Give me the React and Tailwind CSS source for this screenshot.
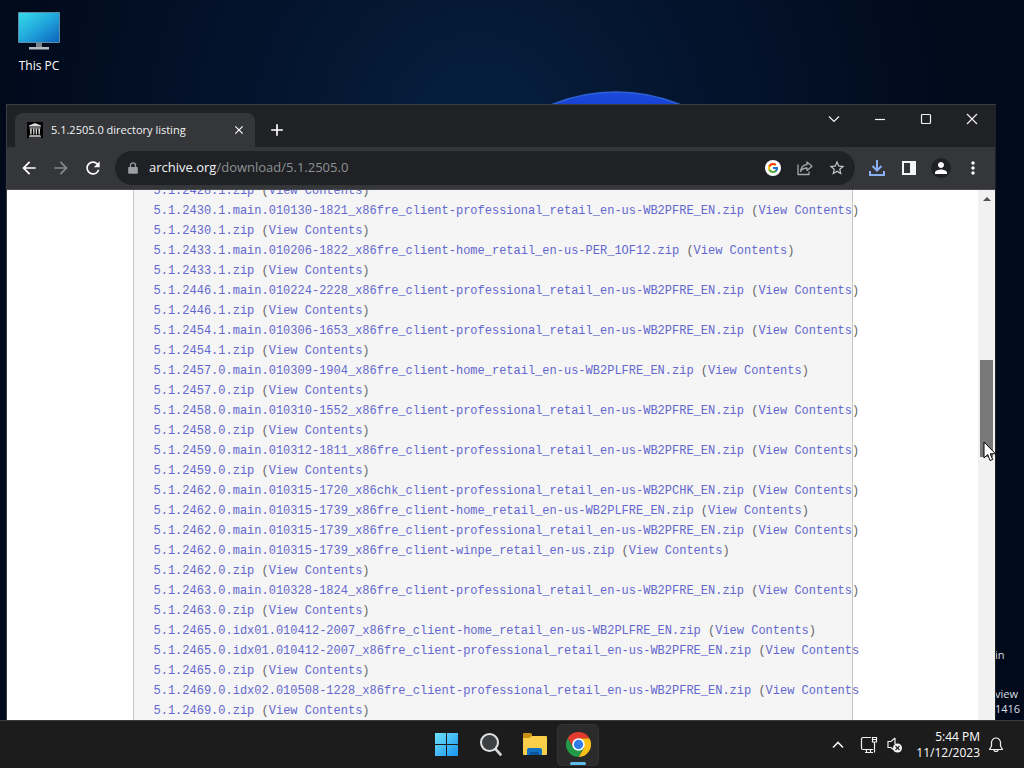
import { MdArrowBack, MdArrowForward, MdRefresh, MdStarBorder, MdMoreVert, MdPerson, MdAdd, MdClose } from 'react-icons/md';
import { FcGoogle } from 'react-icons/fc';

// Directory entries, in the order the listing shows them
const files = [
  '5.1.2428.1.zip',
  '5.1.2430.1.main.010130-1821_x86fre_client-professional_retail_en-us-WB2PFRE_EN.zip',
  '5.1.2430.1.zip',
  '5.1.2433.1.main.010206-1822_x86fre_client-home_retail_en-us-PER_1OF12.zip',
  '5.1.2433.1.zip',
  '5.1.2446.1.main.010224-2228_x86fre_client-professional_retail_en-us-WB2PFRE_EN.zip',
  '5.1.2446.1.zip',
  '5.1.2454.1.main.010306-1653_x86fre_client-professional_retail_en-us-WB2PFRE_EN.zip',
  '5.1.2454.1.zip',
  '5.1.2457.0.main.010309-1904_x86fre_client-home_retail_en-us-WB2PLFRE_EN.zip',
  '5.1.2457.0.zip',
  '5.1.2458.0.main.010310-1552_x86fre_client-professional_retail_en-us-WB2PFRE_EN.zip',
  '5.1.2458.0.zip',
  '5.1.2459.0.main.010312-1811_x86fre_client-professional_retail_en-us-WB2PFRE_EN.zip',
  '5.1.2459.0.zip',
  '5.1.2462.0.main.010315-1720_x86chk_client-professional_retail_en-us-WB2PCHK_EN.zip',
  '5.1.2462.0.main.010315-1739_x86fre_client-home_retail_en-us-WB2PLFRE_EN.zip',
  '5.1.2462.0.main.010315-1739_x86fre_client-professional_retail_en-us-WB2PFRE_EN.zip',
  '5.1.2462.0.main.010315-1739_x86fre_client-winpe_retail_en-us.zip',
  '5.1.2462.0.zip',
  '5.1.2463.0.main.010328-1824_x86fre_client-professional_retail_en-us-WB2PFRE_EN.zip',
  '5.1.2463.0.zip',
  '5.1.2465.0.idx01.010412-2007_x86fre_client-home_retail_en-us-WB2PLFRE_EN.zip',
  '5.1.2465.0.idx01.010412-2007_x86fre_client-professional_retail_en-us-WB2PFRE_EN.zip',
  '5.1.2465.0.zip',
  '5.1.2469.0.idx02.010508-1228_x86fre_client-professional_retail_en-us-WB2PFRE_EN.zip',
  '5.1.2469.0.zip',
];

const Wallpaper = () => (
  <svg className="absolute inset-0 h-full w-full" viewBox="0 0 1024 720" preserveAspectRatio="none" aria-hidden="true">
    <defs>
      <radialGradient id="glow" gradientUnits="userSpaceOnUse" cx="480" cy="130" r="480">
        <stop offset="0" stopColor="#062040" />
        <stop offset="0.45" stopColor="#04142e" />
        <stop offset="1" stopColor="#010a1b" />
      </radialGradient>
      <linearGradient id="bloom" x1="0" y1="0" x2="0" y2="1">
        <stop offset="0" stopColor="#1c4bdc" />
        <stop offset="0.1" stopColor="#0f2fc0" />
      </linearGradient>
    </defs>
    <rect width="1024" height="720" fill="url(#glow)" />
    <circle cx="616" cy="262" r="170" fill="url(#bloom)" stroke="#2f62d8" strokeWidth="1.5" />
  </svg>
);

const ThisPcIcon = () => (
  <svg width="44" height="40" viewBox="0 0 44 40" aria-hidden="true">
    <defs>
      <linearGradient id="screen" x1="0" y1="0" x2="1" y2="1">
        <stop offset="0" stopColor="#35dbe8" />
        <stop offset="0.5" stopColor="#21a6dc" />
        <stop offset="1" stopColor="#0c63bd" />
      </linearGradient>
    </defs>
    <rect x="1" y="2" width="42" height="31" rx="1" fill="#5c8ea6" />
    <rect x="2" y="3" width="40" height="29" fill="url(#screen)" />
    <path d="M19 33h6v4h-6z" fill="#78828a" />
    <path d="M12 37h20v2.500H12z" fill="#b4bcc2" />
  </svg>
);

const ArchiveIcon = () => (
  <svg width="16" height="16" viewBox="0 0 16 16" className="shrink-0" aria-hidden="true">
    <rect width="16" height="16" fill="#000" />
    <path d="M8 1 14 3.6v1H2v-1zM2.5 5.4h11v1h-11zM2.5 13h11v.8h-11zM2 14.3h12v1H2z" fill="#d8d8d8" />
    <path d="M3 6.8h1.8l-.3 5.8H3.3zM6 6.8h1.5l-.2 5.8H6.2zM8.6 6.8h1.5l-.2 5.8H8.8zM11.3 6.8H13l-.2 5.8h-1.2z" fill="#d8d8d8" />
  </svg>
);

const LockIcon = () => (
  <svg width="10" height="12" viewBox="0 0 10 12" className="shrink-0" aria-hidden="true">
    <path d="M1 5h8q.8 0 .8.8v5.200q0 .8-.8.8H1q-.8 0-.8-.8V5.800Q.2 5 1 5z" fill="#9aa0a6" />
    <path d="M2.500 5.500V3.300a2.500 2.500 0 0 1 5 0v2.200" fill="none" stroke="#9aa0a6" strokeWidth="1.300" />
  </svg>
);

const ShareIcon = () => (
  <svg width="16" height="16" viewBox="0 0 16 16" fill="none" stroke="#a3a6aa" strokeWidth="1.3" strokeLinejoin="round" aria-hidden="true">
    <path d="M1 4.5v10h11V11.5" />
    <path d="M10 2l5 4.2-5 4.2V8C7 8 4.8 9 3.5 11.5 4 7.5 6.3 4.8 10 4.5z" />
  </svg>
);

const DownloadIcon = () => (
  <svg width="18" height="18" viewBox="0 0 18 18" fill="none" stroke="#8ab0f5" strokeWidth="2" aria-hidden="true">
    <path d="M9 1v10M4.5 7 9 11.5 13.5 7M2 12v4h14v-4" />
  </svg>
);

const SidePanelIcon = () => (
  <svg width="14" height="14" viewBox="0 0 14 14" aria-hidden="true">
    <path fillRule="evenodd" d="M0 0h14v14H0zM2 2v10h6V2z" fill="#f4f5f6" />
  </svg>
);

const WindowsIcon = () => (
  <svg width="24" height="24" viewBox="0 0 24 24" aria-hidden="true">
    <defs>
      <linearGradient id="win" gradientUnits="userSpaceOnUse" x1="0" y1="0" x2="24" y2="24">
        <stop offset="0" stopColor="#6fe3fb" />
        <stop offset="1" stopColor="#1792ee" />
      </linearGradient>
    </defs>
    <path d="M1 0h11v11H1zM13 0h11v11H13zM1 12h11v11H1zM13 12h11v11H13z" fill="url(#win)" />
  </svg>
);

const SearchIcon = () => (
  <svg width="24" height="24" viewBox="0 0 24 24" aria-hidden="true">
    <path d="M17 15.500l5.500 6" stroke="#d5d5d5" strokeWidth="2.6" strokeLinecap="round" />
    <circle cx="11.500" cy="9.500" r="8.500" fill="#3d4043" stroke="#e2e2e2" strokeWidth="2" />
  </svg>
);

const FolderIcon = () => (
  <svg width="26" height="24" viewBox="0 0 26 24" aria-hidden="true">
    <path d="M2 1q0-1 1-1h6q1 0 2 1v3L7 6H2z" fill="#c98f16" />
    <path d="M2 5h6l3-2h14q1 0 1 1v17q0 1-1 1H3q-1 0-1-1z" fill="#f9cf4a" />
    <path d="M6 22v-5q0-2 2-2h11q2 0 2 2v5z" fill="#1172c4" />
    <path d="M9 19h9v3H9z" fill="#0b559c" />
  </svg>
);

const ChromeIcon = () => (
  <svg width="25" height="25" viewBox="0 0 48 48" aria-hidden="true">
    <path d="M24 12h20.800A24 24 0 0 1 24 48L34.400 30z" fill="#fbc116" />
    <path d="M3.200 12A24 24 0 0 1 44.800 12H24L13.600 30z" fill="#e33b2e" />
    <path d="M3.200 12 13.600 30H34.400L24 48A24 24 0 0 1 3.200 12z" fill="#229a48" />
    <circle cx="24" cy="24" r="12" fill="#fff" />
    <circle cx="24" cy="24" r="9" fill="#2f7de9" />
  </svg>
);

const NetworkIcon = () => (
  <svg width="18" height="18" viewBox="0 0 18 18" fill="none" stroke="#f0f0f0" strokeWidth="1.2" aria-hidden="true">
    <path d="M11 1.5H3q-1.500 0-1.500 1.500v9q0 1.500 1.500 1.500h10M5 16.500h8M6.500 13.500v3M10.500 13.500v3" />
    <path d="M12.500 1.500h4v4.500h-4zM12.500 3.500h4M14.500 6v10.500" />
  </svg>
);

const MutedIcon = () => (
  <svg width="18" height="18" viewBox="0 0 18 18" aria-hidden="true">
    <path d="M9 2 5 5.5H2v6h3l3 2.5M9 2v6" fill="none" stroke="#f0f0f0" strokeWidth="1.2" />
    <circle cx="11.5" cy="12" r="4.5" fill="#f4f4f4" />
    <path d="M9.5 10l4 4M13.5 10l-4 4" stroke="#222" strokeWidth="1.2" />
  </svg>
);

const BellIcon = () => (
  <svg width="16" height="16" viewBox="0 0 16 16" fill="none" stroke="#f0f0f0" strokeWidth="1.2" strokeLinejoin="round" aria-hidden="true">
    <path d="M8 1a4.500 4.500 0 0 0-4.500 4.500v3.500L1.500 12.500h13L12.500 9V5.500A4.500 4.500 0 0 0 8 1zM6 12.500a2 2 0 0 0 4 0" />
  </svg>
);

const IconButton = ({ label, children }) => (
  <button type="button" aria-label={label} className="flex h-8 w-8 shrink-0 items-center justify-center">
    {children}
  </button>
);

const CaptionButton = ({ label, d }) => (
  <button type="button" aria-label={label} className="flex h-7 w-[46px] items-center justify-center">
    <svg width="12" height="12" viewBox="0 0 12 12" fill="none" stroke="#f1f1f1" strokeWidth="1.2" aria-hidden="true">
      <path d={d} />
    </svg>
  </button>
);

const TabStrip = () => (
  <div className="flex h-[42px] items-end bg-[#202124] pl-2">
    <div className="flex h-[34px] w-[240px] items-center gap-2 rounded-t-lg bg-[#35363a] pl-3 pr-2">
      <ArchiveIcon />
      <span className="flex-1 truncate text-[11px] font-medium text-[#f1f3f4]">5.1.2505.0 directory listing</span>
      <button type="button" aria-label="Close tab" className="flex h-4 w-4 items-center justify-center">
        <MdClose className="h-3.5 w-3.5 text-white" />
      </button>
    </div>
    <button type="button" aria-label="New tab" className="ml-2 flex h-[34px] w-7 items-center justify-center">
      <MdAdd className="h-5 w-5 text-white" />
    </button>
    <div className="ml-auto flex self-start">
      <CaptionButton label="Search tabs" d="M1 3.5l5 5 5-5" />
      <CaptionButton label="Minimize" d="M1 6.5h10" />
      <CaptionButton label="Maximize" d="M2.5 1.5h7q1 0 1 1v7q0 1-1 1h-7q-1 0-1-1v-7q0-1 1-1z" />
      <CaptionButton label="Close" d="M1 1l10 10M11 1L1 11" />
    </div>
  </div>
);

const Toolbar = () => (
  <div className="flex h-[43px] items-center border-b border-[#4a4b4f] bg-[#35363a] px-1.5">
    <IconButton label="Back"><MdArrowBack className="h-5 w-5 text-white" /></IconButton>
    <IconButton label="Forward"><MdArrowForward className="h-5 w-5 text-[#85878a]" /></IconButton>
    <IconButton label="Reload"><MdRefresh className="h-5 w-5 text-white" /></IconButton>
    <div className="mx-1.5 flex h-[34px] min-w-0 flex-1 items-center gap-[11px] rounded-full bg-[#202124] pl-[13px] pr-0.5">
      <LockIcon />
      <div className="flex-1 truncate text-[13px] text-[#8d9196]">
        <span className="text-[#f1f3f4]">archive.org</span>/download/5.1.2505.0
      </div>
      <div className="flex">
        <IconButton label="Search with Google">
          <span className="flex h-4 w-4 items-center justify-center rounded-full bg-white">
            <FcGoogle className="h-3 w-3" />
          </span>
        </IconButton>
        <IconButton label="Share"><ShareIcon /></IconButton>
        <IconButton label="Bookmark"><MdStarBorder className="h-[18px] w-[18px] text-[#c6c9cc]" /></IconButton>
      </div>
    </div>
    <IconButton label="Downloads"><DownloadIcon /></IconButton>
    <IconButton label="Side panel"><SidePanelIcon /></IconButton>
    <IconButton label="Profile">
      <span className="flex h-5 w-5 items-center justify-center rounded-full bg-[#202124]">
        <MdPerson className="h-[18px] w-[18px] text-white" />
      </span>
    </IconButton>
    <IconButton label="Menu"><MdMoreVert className="h-5 w-5 text-white" /></IconButton>
  </div>
);

const Listing = () => (
  <ul className="mx-auto -mb-px flex w-full max-w-[720px] flex-col justify-end overflow-clip border-x border-[#c4c4c4] bg-[#f5f5f5] pl-5 font-['Liberation_Mono',monospace] text-xs leading-5 text-[#666] [overflow-clip-margin:7px]">
    {files.map((file) => (
      <li key={file} className="h-5 shrink-0 whitespace-nowrap">
        <a href={`#${file}`} className="text-[#6367cf]">{file}</a>
        {' ('}
        <a href={`#${file}/`} className="text-[#6367cf]">View Contents</a>
        {')'}
      </li>
    ))}
  </ul>
);

const BrowserWindow = () => (
  <section className="absolute bottom-0 left-1.5 right-7 top-[104px] flex flex-col border-l border-r border-t border-[#3b3f44] border-r-[#202124]">
    <TabStrip />
    <Toolbar />
    <div className="flex min-h-0 flex-1 overflow-hidden bg-white">
      <div className="flex min-w-0 flex-1">
        <Listing />
      </div>
      <div className="flex w-[17px] flex-col items-center bg-[#f1f1f1]">
        <button type="button" aria-label="Scroll up" className="flex h-[18px] w-full shrink-0 items-center justify-center">
          <svg width="8" height="4" viewBox="0 0 8 4" aria-hidden="true"><path d="M4 0l4 4H0z" fill="#505050" /></svg>
        </button>
        <div className="mt-[152px] h-[97px] w-[13px] bg-[#787878]" />
      </div>
    </div>
  </section>
);

const TaskButton = ({ label, active, children }) => (
  <button
    type="button"
    aria-label={label}
    className={`relative flex h-10 w-10 items-center justify-center rounded ${active ? 'bg-[#2b2b2b] ring-1 ring-[#333]' : ''}`}
  >
    {children}
    {active && <span className="absolute bottom-0 left-3 h-[3px] w-4 rounded-full bg-[#60bdea]" />}
  </button>
);

const Taskbar = () => (
  <footer className="grid h-12 shrink-0 grid-cols-[1fr_auto_1fr] items-center border-t border-[#3a3a3a] bg-[#1c1c1c] text-white">
    <div />
    <nav className="flex gap-1">
      <TaskButton label="Start"><WindowsIcon /></TaskButton>
      <TaskButton label="Search"><SearchIcon /></TaskButton>
      <TaskButton label="File Explorer"><FolderIcon /></TaskButton>
      <TaskButton label="Chrome" active><ChromeIcon /></TaskButton>
    </nav>
    <div className="flex items-center justify-end pr-5">
      <button type="button" aria-label="Hidden icons" className="mr-3.5 flex h-8 w-4 items-center justify-center">
        <svg width="12" height="8" viewBox="0 0 12 8" fill="none" stroke="#f0f0f0" strokeWidth="1.6" aria-hidden="true"><path d="M1 6.5l5-5 5 5" /></svg>
      </button>
      <button type="button" aria-label="Network and volume" className="mr-3 flex gap-2">
        <NetworkIcon />
        <MutedIcon />
      </button>
      <button type="button" className="mr-2 text-right text-xs leading-4">
        5:44 PM
        <br />
        11/12/2023
      </button>
      <button type="button" aria-label="Notifications"><BellIcon /></button>
    </div>
  </footer>
);

export default function App() {
  return (
    <div className="flex h-screen flex-col overflow-hidden font-['Open_Sans','Noto_Sans',sans-serif]">
      <main className="relative flex-1 overflow-hidden bg-[#010a1b]">
        <Wallpaper />
        <button type="button" className="absolute left-0 top-[10px] flex w-[78px] flex-col items-center gap-2 text-xs leading-4 text-white">
          <ThisPcIcon />
          This PC
        </button>
        {/* Build watermark, mostly behind the window */}
        <div className="absolute bottom-1 right-0 w-[29px] text-[11px] leading-[15px] text-[#d9dde3]">
          <p className="mb-6">in</p>
          <p>view</p>
          <p>1416</p>
        </div>
        <BrowserWindow />
        <svg className="absolute right-[27px] top-[441px]" width="14" height="21" viewBox="0 0 14 21" aria-hidden="true">
          <path d="M1 1v16l3.700-3.500 2.300 6 2.700-1-2.400-5.700H12.500z" fill="#fff" stroke="#000" />
        </svg>
      </main>
      <Taskbar />
    </div>
  );
}
